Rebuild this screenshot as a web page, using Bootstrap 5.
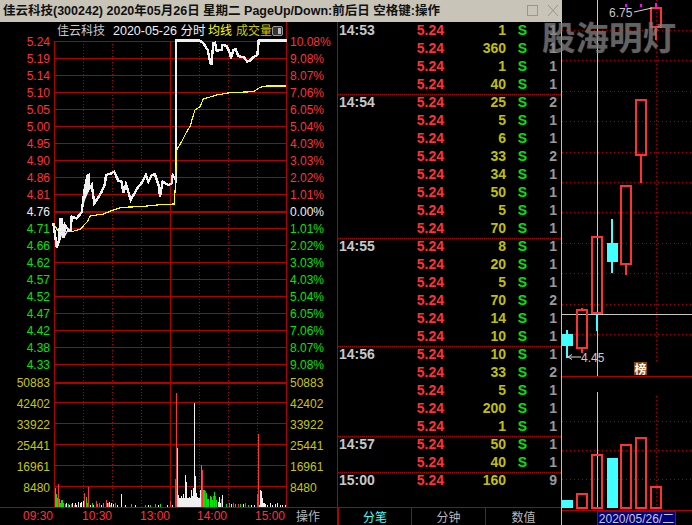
<!DOCTYPE html>
<html lang="zh">
<head>
<meta charset="utf-8">
<title>佳云科技</title>
<link href="https://cdn.jsdelivr.net/npm/bootstrap@5.3.0/dist/css/bootstrap.min.css" rel="stylesheet">
<style>
html,body{margin:0;background:#000;overflow:hidden}
.stage{width:692px;height:525px;background:#000;position:relative;font-family:"Liberation Sans","Noto Sans CJK SC",sans-serif}
.leftcol{width:562px;height:525px}
.titlebar{height:22px;background:#c8c4b8;color:#111;font:bold 12.5px/21px "Liberation Sans","Noto Sans CJK SC",sans-serif;padding-left:3px;white-space:nowrap}
.winbtns{margin-left:auto;padding-right:1px}
.mainrow{height:503px}
.tape{width:224px;height:503px;border-right:1px solid #c0c0c0}
.trow{height:18px;font:bold 14px/16px "Liberation Sans",sans-serif;white-space:nowrap}
.trow.grp{border-top:1px dotted #b00000;line-height:14px}
.tm{width:61px;padding-left:1px;color:#c8c8c8}
.pr{width:45px;text-align:right;color:#ff3232}
.vl{width:62px;text-align:right;color:#c0c000}
.sd{width:21px;text-align:right;color:#00e600}
.ct{width:30px;text-align:right;color:#9a9a9a}
.tabs{height:18px;border-top:1px solid #b00000;margin-top:auto;font:12px/17px "Noto Sans CJK SC",sans-serif;color:#b8b8b8}
.tabcell{border-left:1px solid #b00000;text-align:center}
.tabcell.on{color:#4ff;width:73px}
.tabcell.mid{width:74px}
.watermark{position:absolute;left:542px;top:14px;font:bold 33.5px/44px "Noto Sans CJK SC",sans-serif;color:rgba(130,130,130,.55);text-shadow:0 0 1px rgba(130,130,130,.5);white-space:nowrap;pointer-events:none}
svg text{font-family:"Liberation Sans","Noto Sans CJK SC",sans-serif;font-size:12px}
.crisp{shape-rendering:crispEdges}
.red{fill:#ff3232}.grn{fill:#00e600}.wht{fill:#f0f0f0}.olv{fill:#c8c800}
</style>
</head>
<body>
<div class="stage d-flex">
  <div class="leftcol d-flex flex-column">
    <div class="titlebar d-flex align-items-center">
      <span>佳云科技(300242) 2020年05月26日 星期二 PageUp/Down:前后日 空格键:操作</span>
      <span class="winbtns d-flex align-items-center">
        <svg width="34" height="14" viewBox="0 0 34 14" class="d-block"><rect x=".5" y="1.5" width="10" height="10" fill="none" stroke="#9a978d"/><path d="M21 1 31 12M31 1 21 12" stroke="#9a978d" fill="none"/></svg>
      </span>
    </div>
    <div class="mainrow d-flex">
      <svg width="338" height="503" viewBox="0 22 338 503" class="d-block flex-shrink-0">
        <g class="crisp" fill="none" stroke="#b00000">
          <path d="M54.5 41V507M170.5 41V507M286.5 22V507M337.5 22V525"/>
          <path stroke-dasharray="1 2" d="M83.5 41V507M112.5 41V507M141.5 41V507M199.5 41V507M228.500 41V507M257.500 41V507"/>
          <path d="M54 41.5H287M54 58.5H287M54 75.5H287M54 92.5H287M54 109.5H287M54 126.5H287M54 143.5H287M54 160.5H287M54 177.5H287M54 194.5H287M54 228.5H287M54 245.5H287M54 262.5H287M54 279.5H287M54 296.5H287M54 313.5H287M54 330.5H287M54 347.5H287M54 364.5H287M54 402.5H287M54 423.5H287M54 444.5H287M54 465.5H287M54 486.5H287M0 507.5H338"/>
          <path stroke-width="2" d="M54 212H287M54 383H287"/>
          <path stroke-width="2" d="M338 507V525"/>
        </g>
        <!-- volume bars -->
        <g class="crisp" fill="none" stroke-width="1">
          <rect x="177" y="498" width="24" height="9" fill="#f0f0f0"/>
          <path stroke="#00e600" d="M55.5 488V507M56.5 494V507M57.5 498V507M59.5 499V507M60.5 503V507M61.5 500V507M62.5 500V507M63.5 503V507M65.5 504V507M68.5 504V507M87.5 503V507M86.5 497V507M92.5 503V507M97.5 504V507M103.5 503V507M110.5 505V507M131.5 504V507M145.5 505V507M150.5 505V507M155.5 504V507M160.5 504V507M201.5 465V507M203.5 490V507M204.5 490V507M206.5 493V507M207.5 499V507M208.5 499V507M210.5 496V507M211.5 497V507M212.5 500V507M214.5 492V507M216.5 500V507M226.5 504V507M229.5 503V507M235.5 504V507M240.5 504V507M248.5 505V507"/>
          <path stroke="#f0f0f0" d="M66.5 503V507M69.5 505V507M72.5 503V507M75.5 503V507M76.5 505V507M78.5 502V507M80.5 503V507M81.5 502V507M83.5 501V507M90.5 505V507M93.5 505V507M101.5 505V507M107.5 503V507M109.5 502V507M111.5 503V507M113.5 504V507M117.5 505V507M121.5 494V507M125.5 505V507M135.5 505V507M148.5 505V507M158.5 505V507M167.5 505V507M172.5 505V507M177.5 448V507M178.5 495V507M181.5 496V507M183.5 494V507M185.5 475V507M186.5 482V507M189.5 497V507M191.5 490V507M192.5 496V507M193.5 488V507M194.5 403V507M195.5 476V507M196.5 493V507M197.5 497V507M200.5 490V507M218.5 502V507M219.5 497V507M220.5 503V507M222.5 495V507M231.5 504V507M243.5 504V507M251.5 505V507M254.5 505V507M259.5 505V507M260.5 490V507M261.5 491V507M262.5 498V507M263.5 503V507M264.5 503V507M265.5 504V507M267.5 505V507M270.5 503V507M272.5 505V507M275.5 504V507M277.5 503V507M280.5 505V507M282.5 505V507M285.5 505V507"/>
          <path stroke="#ff3232" d="M58.5 484V507M71.5 504V507M74.5 505V507M84.5 493V507M88.5 487V507M96.5 501V507M99.5 503V507M106.5 500V507M108.5 503V507M115.5 503V507M170.5 501V507M175.5 479V507M176.5 393V507M202.5 470V507M205.5 491V507M213.5 496V507M215.5 496V507M221.5 499V507M233.5 503V507M238.5 504V507M245.5 503V507M257.5 494V507M258.5 434V507"/>
        </g>
        <!-- price: zoom-space coordinates -->
        <g transform="translate(40 160) scale(.33333)">
          <path fill="#f0f0f0" d="M50 262 58 240 60 178 72 235 85 212 66 225 58 250ZM132 100 142 48 147 50 148 90 135 120 125 157Z"/>
          <polyline class="crisp" fill="none" stroke="#f0f0f0" stroke-width="2.4" vector-effect="non-scaling-stroke" points="40,188 50,262 58,240 60,178 66,178 70,235 75,195 85,210 92,212 95,170 110,175 125,157 132,100 142,48 147,45 148,85 155,75 163,130 175,112 185,95 195,72 198,45 215,40 222,35 235,62 245,65 250,98 258,72 272,120 295,80 303,72 318,45 325,65 335,45 345,43 357,80 360,110 368,65 385,75 395,70 398,45 408,60 408,40 408,-30 408,-350"/>
        </g>
        <g transform="translate(170 20) scale(.33333)">
          <polyline class="crisp" fill="none" stroke="#f0f0f0" stroke-width="2.4" vector-effect="non-scaling-stroke" points="18,400 18,62 90,62 100,70 113,90 120,125 124,135 130,70 135,68 140,92 155,90 157,75 170,78 180,100 183,115 190,90 197,88 205,108 222,112 232,125 240,122 250,112 262,105 266,62 352,62"/>
        </g>
        <g transform="translate(0 130) scale(.33333)">
          <polyline class="crisp" fill="none" stroke="#ffff00" stroke-width="1.2" vector-effect="non-scaling-stroke" points="160,280 175,305 215,305 240,298 262,275 270,258 310,252 340,240 365,232 420,230 480,224 523,222 527,150 530,60 545,35 555,15 563,0"/>
        </g>
        <g transform="scale(.33333)">
          <polyline class="crisp" fill="none" stroke="#ffff00" stroke-width="1.2" vector-effect="non-scaling-stroke" points="563,390 570,380 580,345 585,330 600,320 610,297 650,285 690,278 760,275 780,262 800,258 858,258"/>
        </g>
        <!-- header -->
        <text x="57" y="35" fill="#c8c8c8">佳云科技</text>
        <text x="113" y="35" fill="#f0f0f0" style="font-size:12.5px">2020-05-26 分时</text>
        <text x="208" y="35" fill="#ffff00">均线</text>
        <text x="236" y="35" fill="#c8c800">成交量</text>
        <rect x="272.5" y="26.5" width="10" height="9" rx="1.5" fill="#333" stroke="#999"/><rect x="278" y="28" width="3" height="6" fill="#bbb"/>
        <!-- left price axis -->
        <g text-anchor="end">
          <g class="red"><text x="50" y="46">5.24</text><text x="50" y="63">5.19</text><text x="50" y="80">5.14</text><text x="50" y="97">5.10</text><text x="50" y="114">5.05</text><text x="50" y="131">5.00</text><text x="50" y="148">4.95</text><text x="50" y="165">4.90</text><text x="50" y="182">4.86</text><text x="50" y="199">4.81</text></g>
          <text x="50" y="216" class="wht">4.76</text>
          <g class="grn"><text x="50" y="233">4.71</text><text x="50" y="250">4.66</text><text x="50" y="267">4.62</text><text x="50" y="284">4.57</text><text x="50" y="301">4.52</text><text x="50" y="318">4.47</text><text x="50" y="335">4.42</text><text x="50" y="352">4.38</text><text x="50" y="369">4.33</text></g>
          <g class="olv"><text x="50" y="387">50883</text><text x="50" y="408">42402</text><text x="50" y="429">33922</text><text x="50" y="450">25441</text><text x="50" y="471">16961</text><text x="50" y="492">8480</text></g>
        </g>
        <!-- right pct axis -->
        <g>
          <g class="red"><text x="290" y="46">10.08%</text><text x="290" y="63">9.08%</text><text x="290" y="80">8.07%</text><text x="290" y="97">7.06%</text><text x="290" y="114">6.05%</text><text x="290" y="131">5.04%</text><text x="290" y="148">4.03%</text><text x="290" y="165">3.03%</text><text x="290" y="182">2.02%</text><text x="290" y="199">1.01%</text></g>
          <text x="290" y="216" class="wht">0.00%</text>
          <g class="grn"><text x="290" y="233">1.01%</text><text x="290" y="250">2.02%</text><text x="290" y="267">3.03%</text><text x="290" y="284">4.03%</text><text x="290" y="301">5.04%</text><text x="290" y="318">6.05%</text><text x="290" y="335">7.06%</text><text x="290" y="352">8.07%</text><text x="290" y="369">9.08%</text></g>
          <g class="olv"><text x="290" y="387">50883</text><text x="290" y="408">42402</text><text x="290" y="429">33922</text><text x="290" y="450">25441</text><text x="290" y="471">16961</text><text x="290" y="492">8480</text></g>
        </g>
        <!-- time axis -->
        <g class="red" text-anchor="middle"><text x="38" y="520">09:30</text><text x="97" y="520">10:30</text><text x="155" y="520">13:00</text><text x="212" y="520">14:00</text><text x="270" y="520">15:00</text></g>
        <text x="308" y="521" text-anchor="middle" fill="#b8b8b8">操作</text>
      </svg>
      <div class="tape d-flex flex-column flex-shrink-0">
        <div class="trow d-flex"><span class="tm">14:53</span><span class="pr">5.24</span><span class="vl">1</span><span class="sd">S</span><span class="ct">1</span></div>
        <div class="trow d-flex"><span class="tm"></span><span class="pr">5.24</span><span class="vl">360</span><span class="sd">S</span><span class="ct">1</span></div>
        <div class="trow d-flex"><span class="tm"></span><span class="pr">5.24</span><span class="vl">1</span><span class="sd">S</span><span class="ct">1</span></div>
        <div class="trow d-flex"><span class="tm"></span><span class="pr">5.24</span><span class="vl">40</span><span class="sd">S</span><span class="ct">1</span></div>
        <div class="trow grp d-flex"><span class="tm">14:54</span><span class="pr">5.24</span><span class="vl">25</span><span class="sd">S</span><span class="ct">2</span></div>
        <div class="trow d-flex"><span class="tm"></span><span class="pr">5.24</span><span class="vl">5</span><span class="sd">S</span><span class="ct">1</span></div>
        <div class="trow d-flex"><span class="tm"></span><span class="pr">5.24</span><span class="vl">6</span><span class="sd">S</span><span class="ct">1</span></div>
        <div class="trow d-flex"><span class="tm"></span><span class="pr">5.24</span><span class="vl">33</span><span class="sd">S</span><span class="ct">2</span></div>
        <div class="trow d-flex"><span class="tm"></span><span class="pr">5.24</span><span class="vl">34</span><span class="sd">S</span><span class="ct">1</span></div>
        <div class="trow d-flex"><span class="tm"></span><span class="pr">5.24</span><span class="vl">50</span><span class="sd">S</span><span class="ct">1</span></div>
        <div class="trow d-flex"><span class="tm"></span><span class="pr">5.24</span><span class="vl">5</span><span class="sd">S</span><span class="ct">1</span></div>
        <div class="trow d-flex"><span class="tm"></span><span class="pr">5.24</span><span class="vl">70</span><span class="sd">S</span><span class="ct">1</span></div>
        <div class="trow grp d-flex"><span class="tm">14:55</span><span class="pr">5.24</span><span class="vl">8</span><span class="sd">S</span><span class="ct">1</span></div>
        <div class="trow d-flex"><span class="tm"></span><span class="pr">5.24</span><span class="vl">20</span><span class="sd">S</span><span class="ct">1</span></div>
        <div class="trow d-flex"><span class="tm"></span><span class="pr">5.24</span><span class="vl">5</span><span class="sd">S</span><span class="ct">1</span></div>
        <div class="trow d-flex"><span class="tm"></span><span class="pr">5.24</span><span class="vl">70</span><span class="sd">S</span><span class="ct">2</span></div>
        <div class="trow d-flex"><span class="tm"></span><span class="pr">5.24</span><span class="vl">14</span><span class="sd">S</span><span class="ct">1</span></div>
        <div class="trow d-flex"><span class="tm"></span><span class="pr">5.24</span><span class="vl">10</span><span class="sd">S</span><span class="ct">1</span></div>
        <div class="trow grp d-flex"><span class="tm">14:56</span><span class="pr">5.24</span><span class="vl">10</span><span class="sd">S</span><span class="ct">1</span></div>
        <div class="trow d-flex"><span class="tm"></span><span class="pr">5.24</span><span class="vl">33</span><span class="sd">S</span><span class="ct">2</span></div>
        <div class="trow d-flex"><span class="tm"></span><span class="pr">5.24</span><span class="vl">5</span><span class="sd">S</span><span class="ct">1</span></div>
        <div class="trow d-flex"><span class="tm"></span><span class="pr">5.24</span><span class="vl">200</span><span class="sd">S</span><span class="ct">1</span></div>
        <div class="trow d-flex"><span class="tm"></span><span class="pr">5.24</span><span class="vl">1</span><span class="sd">S</span><span class="ct">1</span></div>
        <div class="trow grp d-flex"><span class="tm">14:57</span><span class="pr">5.24</span><span class="vl">50</span><span class="sd">S</span><span class="ct">1</span></div>
        <div class="trow d-flex"><span class="tm"></span><span class="pr">5.24</span><span class="vl">40</span><span class="sd">S</span><span class="ct">1</span></div>
        <div class="trow grp d-flex"><span class="tm">15:00</span><span class="pr">5.24</span><span class="vl">160</span><span class="sd"></span><span class="ct">9</span></div>
        <div class="tabs d-flex">
          <div class="tabcell on">分笔</div>
          <div class="tabcell mid">分钟</div>
          <div class="tabcell flex-grow-1">数值</div>
        </div>
      </div>
    </div>
  </div>
  <svg width="130" height="525" viewBox="562 0 130 525" class="d-block flex-shrink-0">
    <g class="crisp" fill="none">
      <path stroke="#a80000" stroke-dasharray="1 3" d="M562 30.5H692M562 60.5H692M562 91.5H692M562 121.5H692M562 152.5H692M562 182.5H692M562 212.5H692M562 243.5H692M562 273.5H692M562 304.5H692M562 334.5H692M562 421.5H692M562 450.5H692M562 479.5H692M656.5 0V362M656.5 396V507"/>
      <path stroke="#c8c8c8" d="M597.5 0V376M597.5 392V508M562 314.5H692"/>
      <path stroke="#b00000" d="M562 376.5H692M562 510.5H692"/>
      <!-- candles -->
      <path stroke="#4ff" stroke-width="2" d="M567 330V358M597 314V331M612 219V273"/>
      <path fill="#4ff" stroke="none" d="M562 334H573V346H562ZM607 243H618V262H607ZM562 500H573V508H562ZM607 458H618V508H607Z"/>
      <path stroke="#ff3232" stroke-width="2" d="M582 308V310M582 349V353M641 155V183M656 3V8M656 27V40M626 264V275"/>
      <path stroke="#ff3232" stroke-width="2" d="M577 310H587V348H577ZM592 237H602V313H592ZM621 186H631V264H621ZM636 100H646V155H636ZM651 8H661V27H651Z"/>
      <path stroke="#ff3232" stroke-width="2" d="M577 494H587V508H577ZM592 455H602V508H592ZM621 445H631V508H621ZM636 438H646V508H636ZM651 487H661V508H651Z"/>
      <path fill="#f0f" stroke="none" d="M625 4H627V6.5H625ZM640 4H642V6.5H640ZM655 4H657V6.5H655Z"/>
    </g>
    <path d="M634 12 652 8M568 357H581M568 357l4-2.500M568 357l4 2.500" stroke="#d8d8d8" fill="none"/>
    <text x="609" y="17" fill="#c8c8c8">6.75</text>
    <text x="581" y="362" fill="#c8c8c8">4.45</text>
    <rect x="634" y="362" width="13" height="13" fill="#8b4500"/>
    <text x="640.5" y="373.500" text-anchor="middle" fill="#fff" font-weight="bold">榜</text>
    <rect x="597.500" y="511.500" width="78" height="14" fill="#000080" stroke="#a80000"/>
    <text x="636.5" y="523" text-anchor="middle" fill="#c8c8c8">2020/05/26/二</text>
  </svg>
  <div class="watermark">股海明灯</div>
</div>
<script src="https://cdn.jsdelivr.net/npm/bootstrap@5.3.0/dist/js/bootstrap.bundle.min.js"></script>
</body>
</html>
